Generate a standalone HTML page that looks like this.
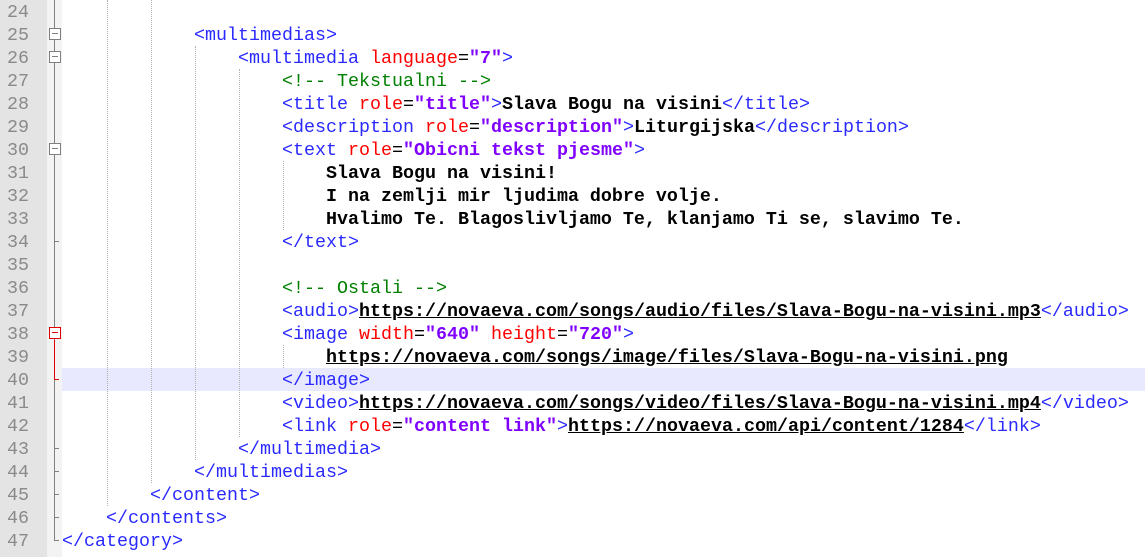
<!DOCTYPE html>
<html><head><meta charset="utf-8"><style>
body{margin:0;width:1145px;height:557px;overflow:hidden;background:#fff;position:relative;font-family:"Liberation Mono","Courier New",monospace}
#num{position:absolute;left:0;top:0;width:47px;height:557px;background:#e4e4e4}
#fold{position:absolute;left:47px;top:0;width:15px;height:557px;background:#f3f3f3}
.n{position:absolute;left:0;width:29px;text-align:right;color:#8a8a8a;font-size:18.33px;line-height:23px;height:23px;margin-top:1px}
.l{position:absolute;left:62px;white-space:pre;font-size:18.33px;line-height:23px;height:23px;color:#000;margin-top:1px}
.t{color:#2a2aff}.a{color:#ff0000}.v{color:#8000ff;font-weight:bold}.c{color:#008000}.b{font-weight:bold}.u{font-weight:bold;text-decoration:underline}
.g{position:absolute;width:0;border-left:1px dotted #b0b0b0}
.box{position:absolute;left:49px;width:10px;height:10px;border:1px solid #808080;background:#fff}
.box:after{content:"";position:absolute;left:2px;top:4px;width:6px;height:1px;background:#808080}
.box.r:after{background:#e00000}
.tick{position:absolute;left:54px;width:5px;height:1px;background:#808080}
</style></head><body>
<div id="num"></div><div id="fold"></div>
<div style="position:absolute;left:62px;top:368px;width:1083px;height:23px;background:#e8e8ff"></div>
<div class="g" style="left:107px;top:0;height:506px"></div>
<div class="g" style="left:151px;top:0;height:483px"></div>
<div class="g" style="left:195px;top:46px;height:414px"></div>
<div class="g" style="left:239px;top:69px;height:368px"></div>
<div class="g" style="left:283px;top:161px;height:69px"></div>
<div class="g" style="left:283px;top:345px;height:23px"></div>
<div style="position:absolute;left:54px;top:0;width:1px;height:541px;background:#808080"></div>
<div style="position:absolute;left:54px;top:340px;width:1px;height:40px;background:#e00000"></div>
<div class="box" style="top:28px"></div>
<div class="box" style="top:51px"></div>
<div class="box" style="top:143px"></div>
<div class="box r" style="top:327px;border-color:#e00000"></div>
<div class="tick" style="top:241px"></div>
<div class="tick" style="top:379px;background:#e00000"></div>
<div class="tick" style="top:448px"></div>
<div class="tick" style="top:471px"></div>
<div class="tick" style="top:494px"></div>
<div class="tick" style="top:517px"></div>
<div class="tick" style="top:540px"></div>

<div class="n" style="top:0">24</div><div class="n" style="top:23px">25</div><div class="n" style="top:46px">26</div><div class="n" style="top:69px">27</div><div class="n" style="top:92px">28</div><div class="n" style="top:115px">29</div><div class="n" style="top:138px">30</div><div class="n" style="top:161px">31</div><div class="n" style="top:184px">32</div><div class="n" style="top:207px">33</div><div class="n" style="top:230px">34</div><div class="n" style="top:253px">35</div><div class="n" style="top:276px">36</div><div class="n" style="top:299px">37</div><div class="n" style="top:322px">38</div><div class="n" style="top:345px">39</div><div class="n" style="top:368px">40</div><div class="n" style="top:391px">41</div><div class="n" style="top:414px">42</div><div class="n" style="top:437px">43</div><div class="n" style="top:460px">44</div><div class="n" style="top:483px">45</div><div class="n" style="top:506px">46</div><div class="n" style="top:529px">47</div>

<div class="l" style="top:23px">            <span class="t">&lt;multimedias&gt;</span></div>
<div class="l" style="top:46px">                <span class="t">&lt;multimedia </span><span class="a">language</span>=<span class="v">"7"</span><span class="t">&gt;</span></div>
<div class="l" style="top:69px">                    <span class="c">&lt;!-- Tekstualni --&gt;</span></div>
<div class="l" style="top:92px">                    <span class="t">&lt;title </span><span class="a">role</span>=<span class="v">"title"</span><span class="t">&gt;</span><span class="b">Slava Bogu na visini</span><span class="t">&lt;/title&gt;</span></div>
<div class="l" style="top:115px">                    <span class="t">&lt;description </span><span class="a">role</span>=<span class="v">"description"</span><span class="t">&gt;</span><span class="b">Liturgijska</span><span class="t">&lt;/description&gt;</span></div>
<div class="l" style="top:138px">                    <span class="t">&lt;text </span><span class="a">role</span>=<span class="v">"Obicni tekst pjesme"</span><span class="t">&gt;</span></div>
<div class="l b" style="top:161px">                        Slava Bogu na visini!</div>
<div class="l b" style="top:184px">                        I na zemlji mir ljudima dobre volje.</div>
<div class="l b" style="top:207px">                        Hvalimo Te. Blagoslivljamo Te, klanjamo Ti se, slavimo Te.</div>
<div class="l" style="top:230px">                    <span class="t">&lt;/text&gt;</span></div>
<div class="l" style="top:276px">                    <span class="c">&lt;!-- Ostali --&gt;</span></div>
<div class="l" style="top:299px">                    <span class="t">&lt;audio&gt;</span><span class="u">https://novaeva.com/songs/audio/files/Slava-Bogu-na-visini.mp3</span><span class="t">&lt;/audio&gt;</span></div>
<div class="l" style="top:322px">                    <span class="t">&lt;image </span><span class="a">width</span>=<span class="v">"640"</span> <span class="a">height</span>=<span class="v">"720"</span><span class="t">&gt;</span></div>
<div class="l" style="top:345px">                        <span class="u">https://novaeva.com/songs/image/files/Slava-Bogu-na-visini.png</span></div>
<div class="l" style="top:368px">                    <span class="t">&lt;/image&gt;</span></div>
<div class="l" style="top:391px">                    <span class="t">&lt;video&gt;</span><span class="u">https://novaeva.com/songs/video/files/Slava-Bogu-na-visini.mp4</span><span class="t">&lt;/video&gt;</span></div>
<div class="l" style="top:414px">                    <span class="t">&lt;link </span><span class="a">role</span>=<span class="v">"content link"</span><span class="t">&gt;</span><span class="u">https://novaeva.com/api/content/1284</span><span class="t">&lt;/link&gt;</span></div>
<div class="l" style="top:437px">                <span class="t">&lt;/multimedia&gt;</span></div>
<div class="l" style="top:460px">            <span class="t">&lt;/multimedias&gt;</span></div>
<div class="l" style="top:483px">        <span class="t">&lt;/content&gt;</span></div>
<div class="l" style="top:506px">    <span class="t">&lt;/contents&gt;</span></div>
<div class="l" style="top:529px"><span class="t">&lt;/category&gt;</span></div>
</body></html>
